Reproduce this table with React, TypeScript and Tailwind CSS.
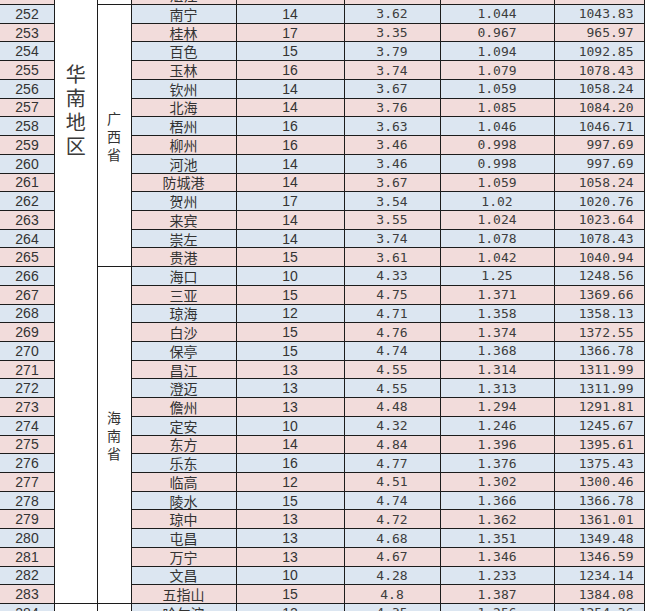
import React from "react";

type Row = [number, string, string, string, string, string];

const rows: Row[] = [
  [251, "湛江", "14", "3.91", "1.125", "1124.67"],
  [252, "南宁", "14", "3.62", "1.044", "1043.83"],
  [253, "桂林", "17", "3.35", "0.967", "965.97"],
  [254, "百色", "15", "3.79", "1.094", "1092.85"],
  [255, "玉林", "16", "3.74", "1.079", "1078.43"],
  [256, "钦州", "14", "3.67", "1.059", "1058.24"],
  [257, "北海", "14", "3.76", "1.085", "1084.20"],
  [258, "梧州", "16", "3.63", "1.046", "1046.71"],
  [259, "柳州", "16", "3.46", "0.998", "997.69"],
  [260, "河池", "14", "3.46", "0.998", "997.69"],
  [261, "防城港", "14", "3.67", "1.059", "1058.24"],
  [262, "贺州", "17", "3.54", "1.02", "1020.76"],
  [263, "来宾", "14", "3.55", "1.024", "1023.64"],
  [264, "崇左", "14", "3.74", "1.078", "1078.43"],
  [265, "贵港", "15", "3.61", "1.042", "1040.94"],
  [266, "海口", "10", "4.33", "1.25", "1248.56"],
  [267, "三亚", "15", "4.75", "1.371", "1369.66"],
  [268, "琼海", "12", "4.71", "1.358", "1358.13"],
  [269, "白沙", "15", "4.76", "1.374", "1372.55"],
  [270, "保亭", "15", "4.74", "1.368", "1366.78"],
  [271, "昌江", "13", "4.55", "1.314", "1311.99"],
  [272, "澄迈", "13", "4.55", "1.313", "1311.99"],
  [273, "儋州", "13", "4.48", "1.294", "1291.81"],
  [274, "定安", "10", "4.32", "1.246", "1245.67"],
  [275, "东方", "14", "4.84", "1.396", "1395.61"],
  [276, "乐东", "16", "4.77", "1.376", "1375.43"],
  [277, "临高", "12", "4.51", "1.302", "1300.46"],
  [278, "陵水", "15", "4.74", "1.366", "1366.78"],
  [279, "琼中", "13", "4.72", "1.362", "1361.01"],
  [280, "屯昌", "13", "4.68", "1.351", "1349.48"],
  [281, "万宁", "13", "4.67", "1.346", "1346.59"],
  [282, "文昌", "10", "4.28", "1.233", "1234.14"],
  [283, "五指山", "15", "4.8", "1.387", "1384.08"],
  [284, "哈尔滨", "12", "4.35", "1.256", "1254.36"],
];

const sans = "font-['Liberation_Sans',Arial,sans-serif]";
const mono = "font-['DejaVu_Sans_Mono','Liberation_Mono',monospace]";
const cjk = "font-['Noto_Sans_CJK_SC','Noto_Sans',sans-serif]";

function VChars({ text, className }: { text: string; className: string }) {
  return (
    <div className={`flex flex-col items-center ${className}`}>
      {text.split("").map((c, i) => (
        <span key={i}>{c}</span>
      ))}
    </div>
  );
}

export default function App() {
  return (
    <div className="w-[648px] h-[611px] overflow-hidden bg-white">
      <div className="mt-[-13.7px] w-fit grid grid-cols-[54px_41.5px_33px_104px_107px_95px_113px_89px] grid-rows-[repeat(34,17.72px)] gap-px bg-[#1c1c1c] pr-px text-[#333]">
        {/* region column */}
        <div className="col-start-2 row-start-1 row-span-33 bg-white flex justify-center pt-[76px]">
          <VChars text="华南地区" className={`${cjk} text-[20px] leading-[24px] text-[#3a3a3a]`} />
        </div>
        <div className="col-start-2 row-start-34 bg-white" />
        {/* province column */}
        <div className="col-start-3 row-start-1 bg-white" />
        <div className="col-start-3 row-start-2 row-span-14 bg-white flex items-center justify-center">
          <VChars text="广西省" className={`${cjk} text-[14px] leading-[18px]`} />
        </div>
        <div className="col-start-3 row-start-16 row-span-18 bg-white flex items-center justify-center">
          <VChars text="海南省" className={`${cjk} text-[14px] leading-[18px]`} />
        </div>
        <div className="col-start-3 row-start-34 bg-white" />

        {rows.map((r) => {
          const bg = r[0] % 2 === 0 ? "bg-[#dce6f1]" : "bg-[#f2dcdb]";
          return (
            <React.Fragment key={r[0]}>
              <div className={`${bg} ${sans} text-[14px] flex items-center justify-center leading-none`}>{r[0]}</div>
              <div className={`${bg} ${cjk} text-[14px] flex items-center justify-center leading-none`}>{r[1]}</div>
              <div className={`${bg} ${sans} text-[14px] flex items-center justify-center leading-none`}>{r[2]}</div>
              <div className={`${bg} ${mono} text-[13px] flex items-center justify-center leading-none text-[#3d3d3d]`}>{r[3]}</div>
              <div className={`${bg} ${mono} text-[13px] flex items-center justify-center leading-none text-[#3d3d3d]`}>{r[4]}</div>
              <div className={`${bg} ${mono} text-[13px] flex items-center justify-end pr-[10px] leading-none text-[#3d3d3d]`}>{r[5]}</div>
            </React.Fragment>
          );
        })}
      </div>
    </div>
  );
}
